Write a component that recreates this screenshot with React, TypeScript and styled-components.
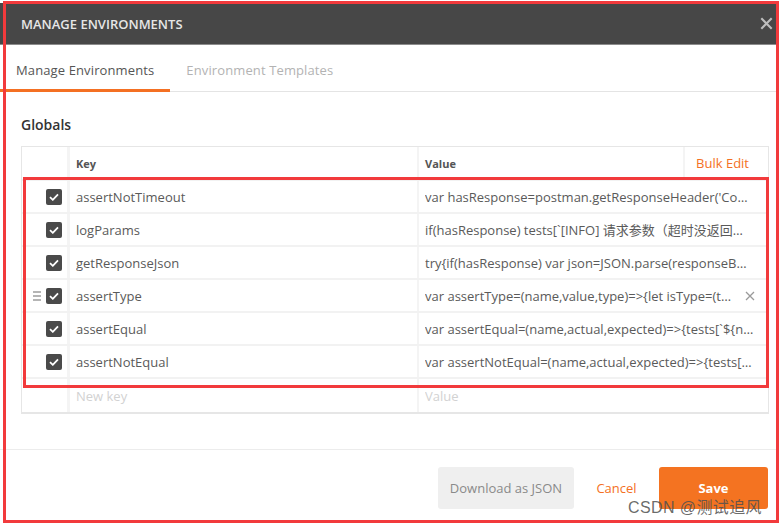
import React from "react";
import styled, { createGlobalStyle } from "styled-components";

const GlobalStyle = createGlobalStyle`
  html, body {
    margin: 0;
    padding: 0;
    background: #ffffff;
  }
  body {
    font-family: "Open Sans", "Noto Sans CJK SC", sans-serif;
  }
  * {
    box-sizing: border-box;
  }
`;

const Page = styled.div`
  position: relative;
  width: 780px;
  height: 525px;
  padding-top: 3px;
  overflow: hidden;
  background: #fff;
`;

const Dialog = styled.div`
  display: flex;
  flex-direction: column;
  width: 778px;
`;

const Header = styled.div`
  height: 42px;
  display: flex;
  align-items: center;
  justify-content: space-between;
  padding: 0 4px 0 21px;
  background: #474747;
  border-bottom: 1px solid #8c8c8c;
`;

const Title = styled.div`
  color: #e6e6e6;
  font-size: 13px;
  font-weight: 600;
`;

const CloseButton = styled.div`
  width: 16px;
  height: 16px;
  display: flex;
  align-items: center;
  justify-content: center;
`;

const TabBar = styled.div`
  display: flex;
  height: 47px;
  border-bottom: 1px solid #e4e4e4;
`;

const Tab = styled.div<{ $active?: boolean }>`
  display: flex;
  align-items: center;
  padding: 6px 16px 0 16px;
  font-size: 13px;
  letter-spacing: 0.12px;
  color: ${(p) => (p.$active ? "#555555" : "#b3b3b3")};
  border-bottom: 3px solid ${(p) => (p.$active ? "#f47023" : "transparent")};
  margin-bottom: -1px;
`;

const Body = styled.div`
  padding: 23px 9px 0 21px;
`;

const SectionTitle = styled.div`
  font-size: 14px;
  font-weight: 600;
  color: #333;
  line-height: 20px;
  margin-bottom: 11px;
`;

const Table = styled.div`
  border: 1px solid #e6e6e6;
  border-bottom-width: 2px;
`;

const Row = styled.div`
  display: grid;
  grid-template-columns: 48px 349px 1fr;
  height: 33px;
  border-bottom: 2px solid #f2f2f2;
  &:last-child {
    border-bottom: none;
  }
`;

const HeadRow = styled(Row)`
  height: 34px;
`;

const HandleCell = styled.div`
  display: flex;
  align-items: center;
  justify-content: flex-end;
  gap: 5px;
  padding-right: 5px;
  border-right: 3px solid #f4f4f4;
`;

const Cell = styled.div<{ $placeholder?: boolean }>`
  display: flex;
  align-items: center;
  min-width: 0;
  padding: 0 14px 0 6px;
  font-size: 13px;
  color: ${(p) => (p.$placeholder ? "#d2d2d2" : "#5a5a5a")};
  border-right: 2px solid #f4f4f4;
  &:last-child {
    border-right: none;
  }
`;

const CellText = styled.span`
  flex: 1;
  min-width: 0;
  white-space: nowrap;
  overflow: hidden;
  text-overflow: ellipsis;
`;

const HeadLabel = styled.span`
  flex: 1;
  font-size: 11px;
  font-weight: 700;
  color: #555;
  padding-top: 1px;
`;

const BulkEdit = styled.span`
  align-self: stretch;
  display: flex;
  align-items: center;
  padding: 0 19px 0 11px;
  margin-right: -14px;
  border-left: 2px solid #f4f4f4;
  font-size: 13px;
  color: #f47023;
`;

const Check = styled.div`
  width: 16px;
  height: 16px;
  border-radius: 2px;
  background: #4a4a4a;
  display: flex;
  align-items: center;
  justify-content: center;
`;

const Drag = styled.div`
  width: 8px;
  display: flex;
  flex-direction: column;
  gap: 2px;
  span {
    display: block;
    height: 2px;
    background: #b5b5b5;
  }
`;

const Remove = styled.div`
  margin-left: 14px;
  margin-right: -1px;
  display: flex;
`;

const Footer = styled.div`
  margin-top: 35px;
  border-top: 1px solid #ececec;
  padding: 17px 10px 0 0;
  display: flex;
  justify-content: flex-end;
  align-items: center;
`;

const Button = styled.div<{ $variant: "ghost" | "link" | "primary" }>`
  height: 42px;
  display: flex;
  align-items: center;
  justify-content: center;
  border-radius: 3px;
  font-size: 13px;
  ${(p) =>
    p.$variant === "ghost"
      ? `width: 136px; background: #efefef; color: #8a8a8a;`
      : p.$variant === "link"
      ? `width: 85px; color: #f47023;`
      : `width: 109px; background: #f47321; color: #fff; font-weight: 700;`}
`;

const Outline = styled.div<{ $l: number; $t: number; $w: number; $h: number }>`
  position: absolute;
  left: ${(p) => p.$l}px;
  top: ${(p) => p.$t}px;
  width: ${(p) => p.$w}px;
  height: ${(p) => p.$h}px;
  border: 3px solid #f23a3c;
  pointer-events: none;
`;

const Watermark = styled.div`
  position: absolute;
  left: 628px;
  top: 494px;
  font-family: "Liberation Sans", "Noto Sans CJK SC", sans-serif;
  font-size: 16px;
  color: rgba(80, 80, 80, 0.85);
  letter-spacing: 0.4px;
`;

const CheckIcon = () => (
  <svg width="10" height="8" viewBox="0 0 10 8">
    <path d="M1 4.2 L3.8 6.8 L9 1.3" fill="none" stroke="#fff" strokeWidth="1.8" />
  </svg>
);

const XIcon = ({ size, color, w }: { size: number; color: string; w: number }) => (
  <svg width={size} height={size} viewBox="0 0 10 10">
    <path d="M1 1 L9 9 M9 1 L1 9" stroke={color} strokeWidth={w} />
  </svg>
);

const rows = [
  {
    key: "assertNotTimeout",
    value: "var hasResponse=postman.getResponseHeader('Content-Type')?true:false;",
  },
  {
    key: "logParams",
    value: "if(hasResponse) tests[`[INFO] 请求参数（超时没返回时可能为空）`]",
  },
  {
    key: "getResponseJson",
    value: "try{if(hasResponse) var json=JSON.parse(responseBody);}catch(err){}",
  },
  {
    key: "assertType",
    value: "var assertType=(name,value,type)=>{let isType=(type==='integer')",
    hover: true,
  },
  {
    key: "assertEqual",
    value: "var assertEqual=(name,actual,expected)=>{tests[`${name}`]",
  },
  {
    key: "assertNotEqual",
    value: "var assertNotEqual=(name,actual,expected)=>{tests[`${name}`]",
  },
];

export default function App() {
  return (
    <Page>
      <GlobalStyle />
      <Dialog>
        <Header>
          <Title>MANAGE ENVIRONMENTS</Title>
          <CloseButton>
            <XIcon size={13} color="#bdbdbd" w={1.6} />
          </CloseButton>
        </Header>
        <TabBar>
          <Tab $active>Manage Environments</Tab>
          <Tab>Environment Templates</Tab>
        </TabBar>
        <Body>
          <SectionTitle>Globals</SectionTitle>
          <Table>
            <HeadRow>
              <HandleCell />
              <Cell>
                <HeadLabel>Key</HeadLabel>
              </Cell>
              <Cell>
                <HeadLabel>Value</HeadLabel>
                <BulkEdit>Bulk Edit</BulkEdit>
              </Cell>
            </HeadRow>
            {rows.map((r) => (
              <Row key={r.key}>
                <HandleCell>
                  {r.hover && (
                    <Drag>
                      <span />
                      <span />
                      <span />
                    </Drag>
                  )}
                  <Check>
                    <CheckIcon />
                  </Check>
                </HandleCell>
                <Cell>
                  <CellText>{r.key}</CellText>
                </Cell>
                <Cell>
                  <CellText>{r.value}</CellText>
                  {r.hover && (
                    <Remove>
                      <XIcon size={10} color="#9a9a9a" w={1.3} />
                    </Remove>
                  )}
                </Cell>
              </Row>
            ))}
            <Row>
              <HandleCell />
              <Cell $placeholder>
                <CellText>New key</CellText>
              </Cell>
              <Cell $placeholder>
                <CellText>Value</CellText>
              </Cell>
            </Row>
          </Table>
        </Body>
        <Footer>
          <Button $variant="ghost">Download as JSON</Button>
          <Button $variant="link">Cancel</Button>
          <Button $variant="primary">Save</Button>
        </Footer>
      </Dialog>
      <Outline $l={3} $t={1} $w={776} $h={522} />
      <Outline $l={23} $t={177} $w={746} $h={211} />
      <Watermark>CSDN @测试追风</Watermark>
    </Page>
  );
}
